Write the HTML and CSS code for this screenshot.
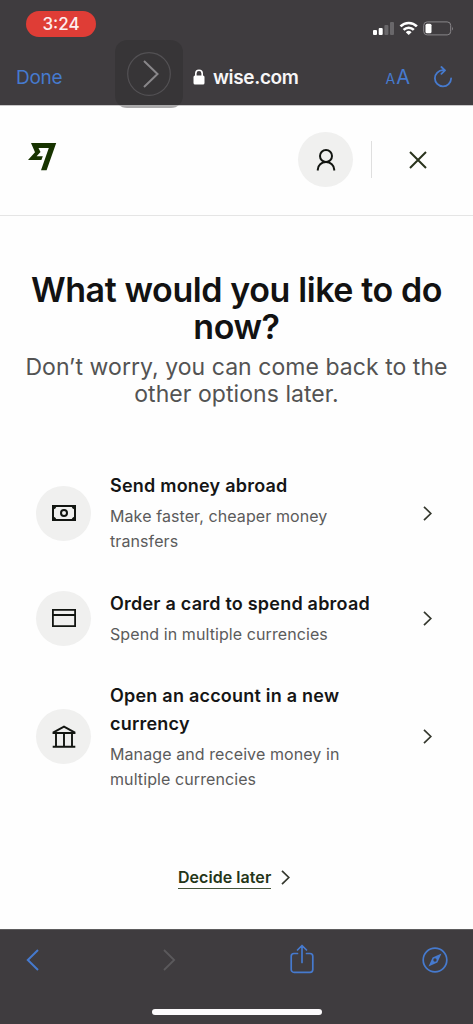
FILE: index.html
```html
<!DOCTYPE html>
<html lang="en">
<head>
<meta charset="utf-8">
<meta name="viewport" content="width=device-width, initial-scale=1">
<title>Wise</title>
<link rel="stylesheet" href="styles.css">
</head>
<body>
<div class="screen">
  <div class="browser-top">
    <div class="status">
      <span class="time">3:24</span>
      <svg class="status-icons" width="82" height="16" viewBox="0 0 82 16">
        <g fill="#fff"><rect x="1" y="9" width="4" height="5" rx="1"/><rect x="6.700" y="7" width="4" height="7" rx="1"/></g>
        <g fill="#69676a"><rect x="12.400" y="4" width="4" height="10" rx="1"/><rect x="18" y="1" width="4" height="13" rx="1"/></g>
        <g fill="none" stroke="#fff" stroke-width="2.600"><path d="M28.500 5.400a11.500 11.500 0 0 1 16.400 0"/><path d="M31.600 8.800a7.200 7.200 0 0 1 10.200 0"/></g>
        <path fill="#fff" d="M33.800 11.200a4.200 4.200 0 0 1 5.800 0L36.700 14z"/>
        <rect x="51.700" y=".9" width="27" height="13" rx="3.500" fill="none" stroke="#89878a"/>
        <rect x="53.500" y="2.700" width="6" height="9.500" rx="1.500" fill="#fff"/>
        <path d="M80 5.500q1.600 2 0 4z" fill="#89878a"/>
      </svg>
    </div>
    <div class="address">
      <span class="done">Done</span>
      <span class="site">
        <svg width="12" height="16" viewBox="0 0 12 16"><rect x=".5" y="6.500" width="11" height="9" rx="1.500" fill="#fff"/><path d="M2.800 7V4.500a3.200 3.200 0 0 1 6.400 0V7" fill="none" stroke="#fff" stroke-width="1.600"/></svg>
        <span class="domain">wise.com</span>
      </span>
      <span class="text-size"><span class="small-a">A</span>A</span>
      <svg class="reload" width="20" height="22" viewBox="0 0 20 22" fill="none" stroke="#467ace" stroke-width="1.800" stroke-linecap="round" stroke-linejoin="round"><path d="M11.200 4.200H10A8.100 8.100 0 1 0 18.100 12.500M8.400 1L12 4.400L8.400 7.800"/></svg>
    </div>
    <div class="assist">
      <svg width="44" height="44" viewBox="0 0 44 44" fill="none"><circle cx="22" cy="22" r="21.300" stroke="#535154" stroke-width="1.200"/><path d="M17 9L30.500 22L17 35" stroke="#89878a" stroke-width="2"/></svg>
    </div>
  </div>

  <header class="header">
    <svg class="logo" width="29" height="28" viewBox="0 0 29 28"><path fill="#173300" fill-rule="evenodd" d="M3 0H28.200L18.600 27.300H13L20.800 5H10.500L12.500 9L8.600 13.200H14.800L13.400 17H0L7 9.200z"/></svg>
    <div class="header-actions">
      <span class="circle">
        <svg width="20" height="22" viewBox="0 0 20 22" fill="none" stroke="#121511" stroke-width="2"><circle cx="10" cy="7" r="6"/><path d="M1.800 21.500v-1a8.200 7.500 0 0 1 16.400 0v1"/></svg>
      </span>
      <span class="divider"></span>
      <svg class="close" width="18" height="18" viewBox="0 0 18 18" fill="none" stroke="#29331c" stroke-width="2"><path d="M1 1L17 17M17 1L1 17"/></svg>
    </div>
  </header>

  <main class="main">
    <h1 class="title">What would you like to do<br>now?</h1>
    <p class="subtitle">Don’t worry, you can come back to the<br>other options later.</p>
    <ul class="options">
      <li class="option">
        <span class="circle">
          <svg width="24" height="16" viewBox="0 0 24 16" fill="none" stroke="#121511" stroke-width="2"><path d="M1 1H23V15H1z"/><circle cx="12" cy="8" r="3"/><path stroke="none" fill="#121511" d="M1 1h3.500Q4 4 1 4.500zM23 1h-3.500Q20 4 23 4.500zM1 15h3.500Q4 12 1 11.500zM23 15h-3.500Q20 12 23 11.500z"/></svg>
        </span>
        <div class="copy"><h2 class="name">Send money abroad</h2><p class="desc">Make faster, cheaper money<br>transfers</p></div>
        <svg class="chevron" width="9" height="15" viewBox="0 0 9 15"><path d="M1 .8L7.800 7.500L1 14.200"/></svg>
      </li>
      <li class="option">
        <span class="circle">
          <svg width="24" height="18" viewBox="0 0 24 18" fill="none" stroke="#121511" stroke-width="1.800"><path d="M.9 .9H23.100V17.100H.9zM1 6H23"/></svg>
        </span>
        <div class="copy"><h2 class="name">Order a card to spend abroad</h2><p class="desc">Spend in multiple currencies</p></div>
        <svg class="chevron" width="9" height="15" viewBox="0 0 9 15"><path d="M1 .8L7.800 7.500L1 14.200"/></svg>
      </li>
      <li class="option">
        <span class="circle">
          <svg width="24" height="23" viewBox="0 0 24 23" fill="none" stroke="#121511" stroke-width="1.900"><path d="M1.500 8V7.300L12 1.600L22.500 7.300V8zM.7 21.700H23.300M4 8V21.500M12 8V21.500M20 8V21.500"/></svg>
        </span>
        <div class="copy"><h2 class="name">Open an account in a new<br>currency</h2><p class="desc">Manage and receive money in<br>multiple currencies</p></div>
        <svg class="chevron" width="9" height="15" viewBox="0 0 9 15"><path d="M1 .8L7.800 7.500L1 14.200"/></svg>
      </li>
    </ul>
    <div class="later">
      <a class="later-link">Decide later</a>
      <svg class="chevron" width="9" height="15" viewBox="0 0 9 15"><path d="M1 .8L7.800 7.500L1 14.200"/></svg>
    </div>
  </main>

  <nav class="browser-bottom">
    <div class="tools">
      <svg class="back" width="13" height="22" viewBox="0 0 13 22" fill="none" stroke="#467ace" stroke-width="2"><path d="M12 1L1.800 11L12 21"/></svg>
      <svg class="forward" width="13" height="22" viewBox="0 0 13 22" fill="none" stroke="#5b595c" stroke-width="1.800"><path d="M1 1L11.200 11L1 21"/></svg>
      <svg class="share" width="24" height="30" viewBox="0 0 24 30" fill="none" stroke="#467ace" stroke-width="1.700" stroke-linecap="round" stroke-linejoin="round"><path d="M7.500 9.500H4A2.800 2.800 0 0 0 1.200 12.300V25.500A2.800 2.800 0 0 0 4 28.300H20A2.800 2.800 0 0 0 22.800 25.500V12.300A2.800 2.800 0 0 0 20 9.500H16.500M12 18.500V1.500M7.500 6L12 1.500L16.500 6"/></svg>
      <svg class="compass" width="26" height="26" viewBox="0 0 26 26"><circle cx="13" cy="13" r="11.800" fill="none" stroke="#467ace" stroke-width="1.700"/><path fill="#467ace" fill-rule="evenodd" d="M19.500 6.500L15.400 15.400L6.500 19.500L10.600 10.600zM13 11.300a1.700 1.700 0 1 0 0 3.400a1.700 1.700 0 1 0 0-3.400z"/></svg>
    </div>
    <div class="home"></div>
  </nav>
</div>
</body>
</html>
```
FILE: styles.css
```css
* { box-sizing: border-box; }
body, h1, h2, p, ul { margin: 0; padding: 0; }
body { background: #fefefe; font-family: Inter, "Liberation Sans", sans-serif; }
svg { display: block; flex: none; }
.screen { width: 473px; height: 1024px; display: flex; flex-direction: column; overflow: hidden; }

.browser-top { position: relative; height: 105px; flex: none; background: #3f3c3f; }
.status { height: 48px; padding: 11px 19px 0 26px; display: flex; justify-content: space-between; }
.time { width: 70px; height: 26px; border-radius: 13px; background: #df3d36; color: #fdeeee; font-size: 17px; line-height: 27px; text-align: center; font-weight: 500; }
.status-icons { margin-top: 10px; }
.address { height: 57px; padding: 1px 20px 0 16px; display: flex; align-items: center; color: #467ace; }
.done { width: 177px; font-size: 19px; letter-spacing: -.3px; }
.site { flex: 1; display: flex; align-items: center; gap: 8px; color: #f7f6f7; }
.domain { font-size: 19px; font-weight: 600; letter-spacing: -.35px; }
.text-size { font-size: 20px; margin-right: 23px; }
.small-a { font-size: 14px; margin-right: 1px; }
.reload { margin-top: -1px; }
.assist { position: absolute; left: 115px; top: 40px; width: 68px; height: 68px; border-radius: 12px; background: linear-gradient(#373537 65px, #aaa9aa 65px); display: grid; place-items: center; z-index: 1; }

.header { height: 111px; flex: none; border-top: 1px solid #c9c8c9; border-bottom: 1px solid #e5e5e5; padding: 0 46px 2px 28px; display: flex; justify-content: space-between; align-items: center; }
.logo { margin-top: -6px; }
.header-actions { display: flex; align-items: center; }
.circle { width: 55px; height: 55px; flex: none; border-radius: 50%; background: #f0f0ef; display: grid; place-items: center; }
.divider { width: 1px; height: 37px; background: #dfdfdf; margin: 0 37px 0 18px; }

.main { flex: 1; padding-top: 55px; }
.title { color: #121212; font-size: 34px; line-height: 37px; font-weight: 600; letter-spacing: -.4px; text-align: center; white-space: nowrap; }
.subtitle { margin-top: 8.5px; color: #535353; font-size: 23px; line-height: 27.5px; letter-spacing: .05px; text-align: center; white-space: nowrap; }
.options { list-style: none; margin-top: 63.5px; padding: 0 41px 0 36px; display: flex; flex-direction: column; gap: 35.5px; }
.option { display: flex; align-items: center; }
.copy { flex: 1; margin-left: 19px; white-space: nowrap; }
.name { color: #151515; font-size: 18px; line-height: 27.7px; font-weight: 600; letter-spacing: .22px; }
.desc { margin-top: 4.300px; color: #5b5b5b; font-size: 16px; line-height: 25px; letter-spacing: .09px; }
.chevron { fill: none; stroke: #35382e; stroke-width: 1.7; }
.later { margin-top: 74px; padding-left: 178px; display: flex; align-items: center; gap: 10px; }
.later-link { color: #243518; font-size: 16px; line-height: 22px; font-weight: 600; letter-spacing: .05px; border-bottom: 1px solid #43533a; }

.browser-bottom { height: 95px; flex: none; background: #3f3c3f; border-top: 1px solid #5e5c5e; }
.tools { height: 60px; padding: 0 25px 0 26px; display: flex; align-items: center; }
.forward { margin-left: 124px; }
.share { margin: -2px 0 0 114px; }
.compass { margin-left: auto; }
.home { width: 170px; height: 6px; border-radius: 3px; background: #fcfafc; margin: 19px auto 0; }
```
